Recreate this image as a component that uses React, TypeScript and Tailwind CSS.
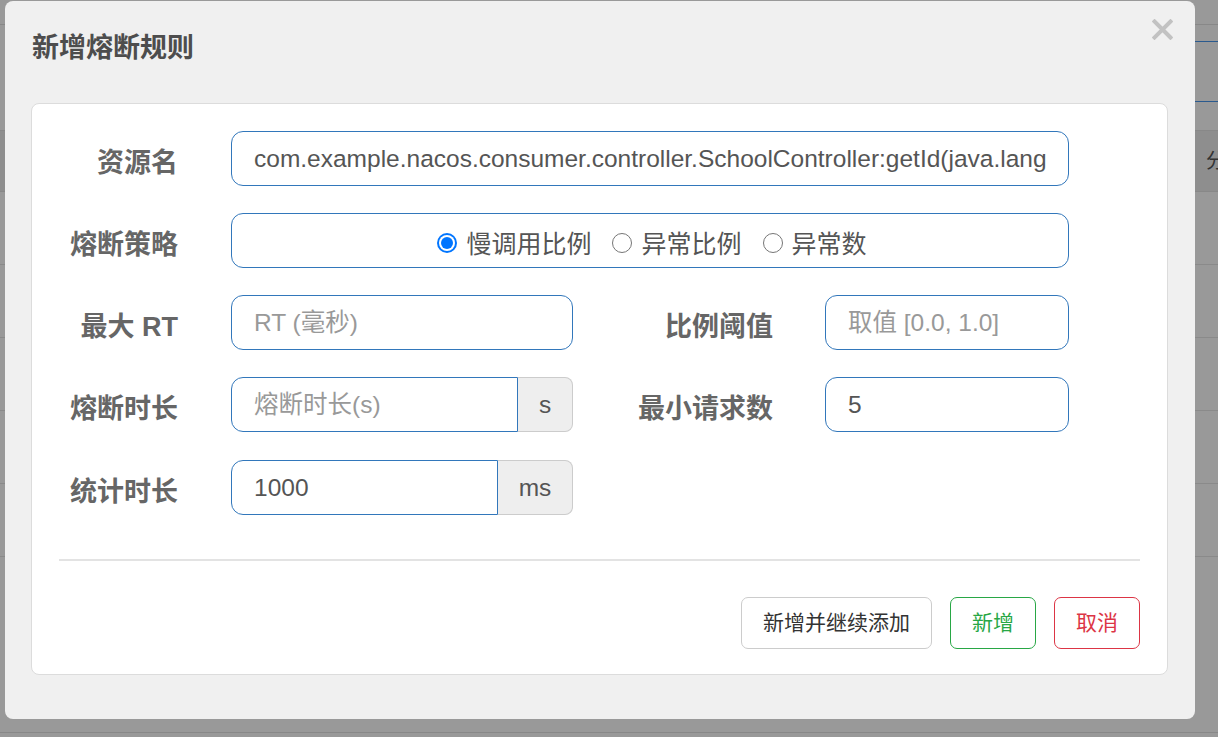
import React from 'react';

const font = { fontFamily: '"Liberation Sans", "Noto Sans CJK SC", sans-serif' };

function Label({ text, className = '' }: { text: string; className?: string }) {
  return (
    <div className={`flex items-center justify-end pt-[10px] text-[27px] font-bold text-[#666] ${className}`}>
      {text}
    </div>
  );
}

function TextInput({ value, placeholder, className = '' }: { value?: string; placeholder?: string; className?: string }) {
  return (
    <div
      className={`h-[55px] border border-[#3277bb] rounded-[12px] bg-white flex items-center pl-[22px] pt-[2px] text-[24.5px] overflow-hidden whitespace-nowrap ${className}`}
    >
      {value ? <span className="text-[#555]">{value}</span> : <span className="text-[#999]">{placeholder}</span>}
    </div>
  );
}

function AddonInput({ value, placeholder, unit, inputWidth }: { value?: string; placeholder?: string; unit: string; inputWidth: string }) {
  return (
    <div className="flex h-[55px] w-[342px]">
      <div
        className={`${inputWidth} h-full border border-[#3277bb] rounded-l-[12px] bg-white flex items-center pl-[22px] pt-[2px] text-[24.5px] whitespace-nowrap`}
      >
        {value ? <span className="text-[#555]">{value}</span> : <span className="text-[#999]">{placeholder}</span>}
      </div>
      <div className="flex-1 h-full border border-l-0 border-[#ccc] rounded-r-[8px] bg-[#eee] flex items-center justify-center pt-[2px] text-[24.5px] text-[#555]">
        {unit}
      </div>
    </div>
  );
}

function Radio({ label, checked }: { label: string; checked?: boolean }) {
  return (
    <div className="flex items-center gap-[9px]">
      {checked ? (
        <span className="w-[20px] h-[20px] rounded-full bg-[#0075ff] flex items-center justify-center">
          <span className="w-[16px] h-[16px] rounded-full bg-white flex items-center justify-center">
            <span className="w-[12px] h-[12px] rounded-full bg-[#0075ff]" />
          </span>
        </span>
      ) : (
        <span className="w-[20px] h-[20px] rounded-full border-[1.5px] border-[#767676] bg-white" />
      )}
      <span className="text-[25px] text-[#555] pt-[4px]">{label}</span>
    </div>
  );
}

function Background() {
  return (
    <div className="absolute inset-0 bg-[#999]">
      <div className="h-[25px] border-b border-[#888]" />
      <div className="flex">
        <div className="flex-1" />
        <div className="w-[30px] mt-[16px] h-[61px] border-y border-[#2b5a8e]" />
      </div>
      <div className="mt-[28px] h-[62px] bg-[#8e8e8e] border-y border-[#888] flex items-center justify-end">
        <span className="text-[20px] text-[#333] -mr-[8px]">分</span>
      </div>
      {[0, 1, 2, 3, 4].map((i) => (
        <div key={i} className="h-[73px] border-b border-[#8a8a8a]" />
      ))}
      <div className="absolute left-0 right-0 top-[732px] border-b border-[#888]" />
    </div>
  );
}

export default function App() {
  return (
    <div className="relative w-[1218px] h-[737px] overflow-hidden" style={font}>
      <Background />
      <div className="absolute left-[5px] top-[1px] w-[1190px] h-[718px] bg-[#f0f0f0] rounded-[8px] flex flex-col">
        <div className="relative h-[102px] flex items-start pl-[27px] pt-[30px]">
          <h2 className="text-[27px] font-bold text-[#4d4d4d] leading-[34px]">新增熔断规则</h2>
          <svg className="absolute right-[22px] top-[18px]" width="21" height="21" viewBox="0 0 21 21">
            <path d="M2.5 2.5 L18.5 18.5 M18.5 2.5 L2.5 18.5" stroke="#c2c2c2" strokeWidth="4" strokeLinecap="square" />
          </svg>
        </div>
        <div className="mx-[26px] w-[1137px] h-[572px] bg-white border border-[#dcdcdc] rounded-[8px] pt-[27px] flex flex-col">
          <div className="flex flex-col gap-[27px]">
            <div className="flex">
              <Label text="资源名" className="w-[146px]" />
              <div className="w-[53px]" />
              <TextInput value="com.example.nacos.consumer.controller.SchoolController:getId(java.lang" className="w-[838px]" />
            </div>
            <div className="flex">
              <Label text="熔断策略" className="w-[146px]" />
              <div className="w-[53px]" />
              <div className="w-[838px] h-[55px] border border-[#3277bb] rounded-[12px] flex items-center justify-center gap-[21px] pt-[4px] pl-[4px]">
                <Radio label="慢调用比例" checked />
                <Radio label="异常比例" />
                <Radio label="异常数" />
              </div>
            </div>
            <div className="flex">
              <Label text="最大 RT" className="w-[146px]" />
              <div className="w-[53px]" />
              <TextInput placeholder="RT (毫秒)" className="w-[342px]" />
              <Label text="比例阈值" className="w-[200px]" />
              <div className="w-[52px]" />
              <TextInput placeholder="取值 [0.0, 1.0]" className="w-[244px]" />
            </div>
            <div className="flex">
              <Label text="熔断时长" className="w-[146px]" />
              <div className="w-[53px]" />
              <AddonInput placeholder="熔断时长(s)" unit="s" inputWidth="w-[287px]" />
              <Label text="最小请求数" className="w-[200px]" />
              <div className="w-[52px]" />
              <TextInput value="5" className="w-[244px]" />
            </div>
            <div className="flex mt-[1px]">
              <Label text="统计时长" className="w-[146px]" />
              <div className="w-[53px]" />
              <AddonInput value="1000" unit="ms" inputWidth="w-[267px]" />
            </div>
          </div>
          <div className="mx-[27px] mt-[44px] h-[2px] bg-[#e3e3e3]" />
          <div className="mx-[27px] mt-[36px] flex justify-end gap-[18px]">
            <button className="w-[191px] h-[52px] border border-[#ccc] rounded-[7px] bg-white text-[21px] text-[#333]">
              新增并继续添加
            </button>
            <button className="w-[86px] h-[52px] border border-[#28a745] rounded-[7px] bg-white text-[21px] text-[#28a745]">
              新增
            </button>
            <button className="w-[86px] h-[52px] border border-[#dc3545] rounded-[7px] bg-white text-[21px] text-[#dc3545]">
              取消
            </button>
          </div>
        </div>
      </div>
    </div>
  );
}
